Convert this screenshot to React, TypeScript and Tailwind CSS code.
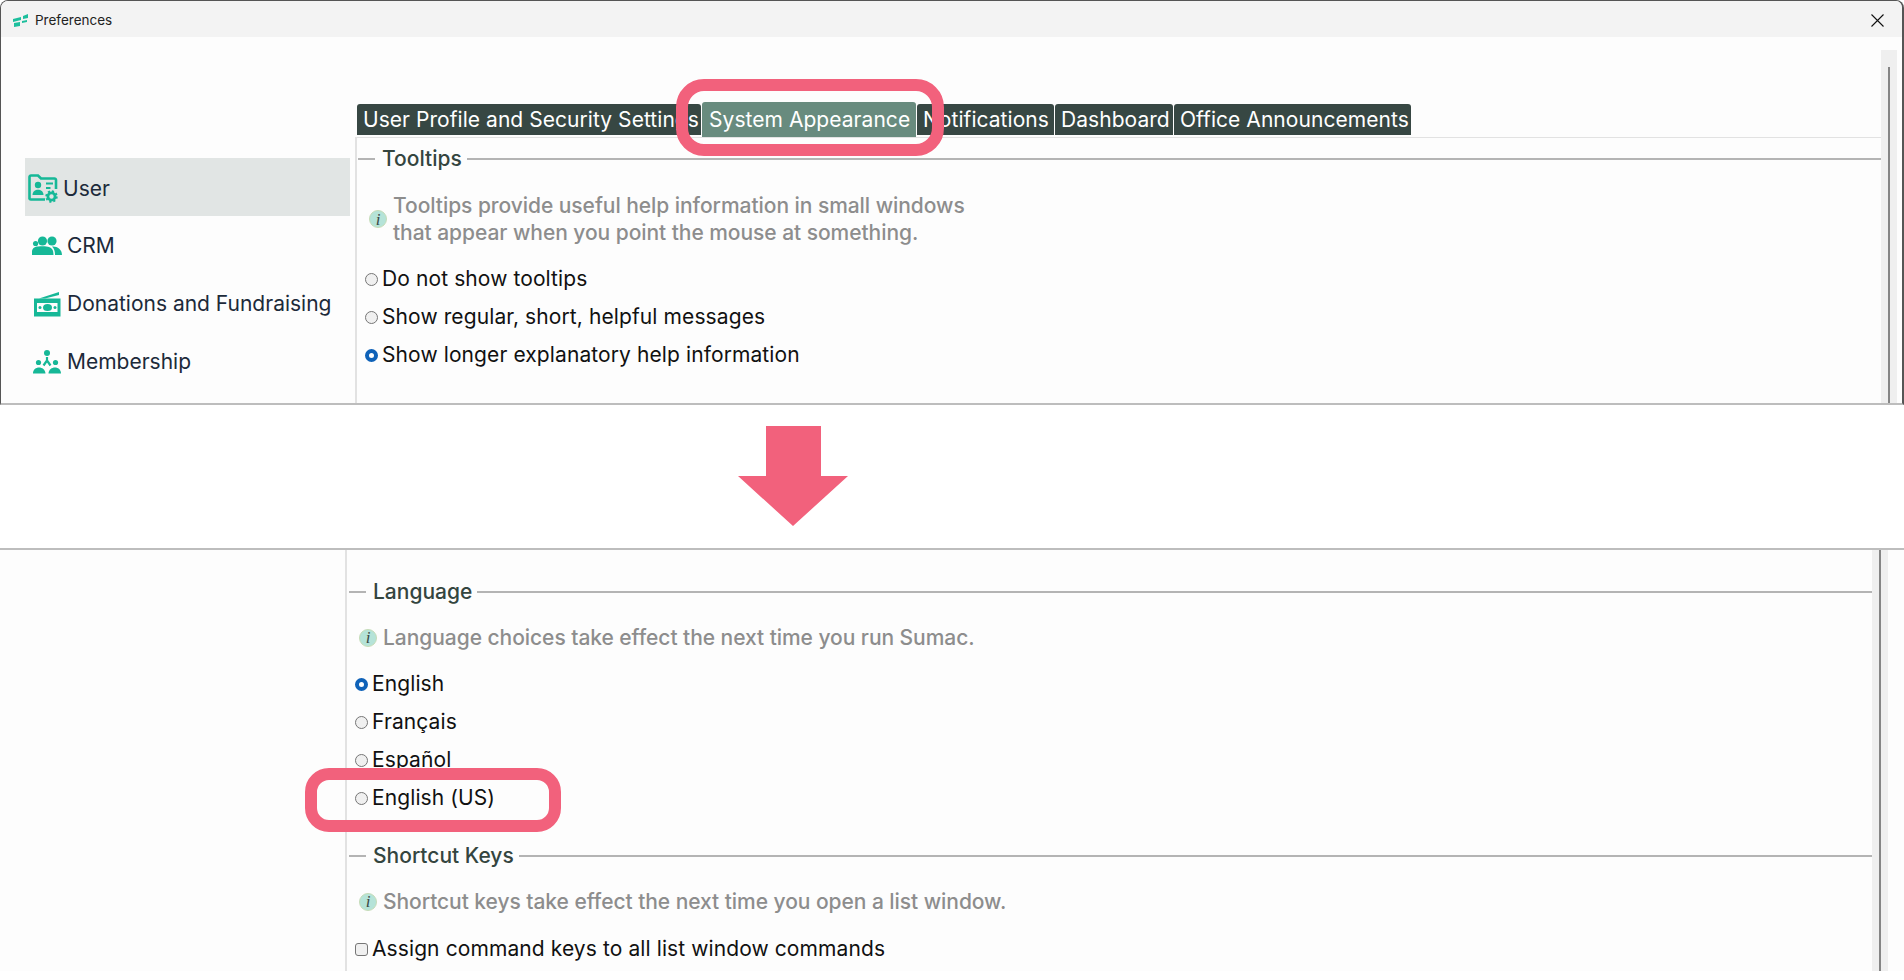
const FONT = "font-['Inter','Noto_Sans',sans-serif]";

const TABS = [
  { label: 'User Profile and Security Settings', width: 'w-[344px]', active: false },
  { label: 'System Appearance', width: 'w-[214px]', active: true },
  { label: 'Notifications', width: 'w-[137px]', active: false },
  { label: 'Dashboard', width: 'w-[118px]', active: false },
  { label: 'Office Announcements', width: 'w-[237px]', active: false },
];

function AppLogo() {
  return (
    <svg width="15" height="13" viewBox="0 0 15 13" className="shrink-0">
      <path d="M0 5 L8 3 V6 L0 8 Z M10 2 L15 0 V4 L10 5 Z M1 9 L7 8 V12 L1 13 Z M9 7 L14 6 V8 L9 9 Z" fill="#1dbf9d" />
    </svg>
  );
}

function UserIcon() {
  return (
    <svg width="30" height="29" viewBox="0 0 30 29" className="shrink-0">
      <path d="M1.500 25 V3 a1.500 1.500 0 0 1 1.500-1.500 H10 l3 3 H26.500 a1.500 1.500 0 0 1 1.500 1.500 V15 M17 25.500 H3 A1.500 1.500 0 0 1 1.500 24" fill="none" stroke="#16b897" strokeWidth="2.600" />
      <circle cx="10" cy="11" r="3.200" fill="#16b897" />
      <path d="M4.500 21 c0-7 11-7 11 0 Z" fill="#16b897" />
      <path d="M18 9.500 H25 M18 14 H22.500" stroke="#16b897" strokeWidth="2.200" />
      <circle cx="23.500" cy="22.500" r="3.600" fill="none" stroke="#16b897" strokeWidth="2.800" />
      <circle cx="23.500" cy="22.500" r="5.400" fill="none" stroke="#16b897" strokeWidth="1.600" strokeDasharray="2.200 2" />
    </svg>
  );
}

function CrmIcon() {
  return (
    <svg width="30" height="20" viewBox="0 0 30 20" className="shrink-0">
      <circle cx="10.500" cy="5" r="4.600" fill="#16b897" />
      <circle cx="20" cy="5" r="4.600" fill="#16b897" />
      <circle cx="3.600" cy="7.500" r="2.600" fill="#16b897" />
      <path d="M0 19 V16 C0 12 3 10.500 6 10.500 C9 10 15 10 17 11 C20 12 21.500 14 21.500 19 Z" fill="#16b897" />
      <path d="M20 10.500 C25 10 30 13 30 19 H23 C23 15 22 12.500 20 10.500 Z" fill="#16b897" />
    </svg>
  );
}

function DonationsIcon() {
  return (
    <svg width="28" height="25" viewBox="0 0 28 25" className="shrink-0">
      <path d="M6 6.500 L26 0 V3 L12 6.500 Z" fill="#16b897" />
      <path fillRule="evenodd" d="M1 6.500 H27.500 V24.500 H1 Z M4 11 V20 H24.500 V11 Z" fill="#16b897" />
      <ellipse cx="14.500" cy="15.500" rx="4.500" ry="3.600" fill="#16b897" />
      <circle cx="7" cy="15.500" r="1.500" fill="#16b897" />
      <circle cx="22" cy="15.500" r="1.500" fill="#16b897" />
    </svg>
  );
}

function MembershipIcon() {
  return (
    <svg width="28" height="24" viewBox="0 0 28 24" className="shrink-0">
      <circle cx="14" cy="3" r="3" fill="#16b897" />
      <circle cx="5.500" cy="12.500" r="2.600" fill="#16b897" />
      <circle cx="22.500" cy="12.500" r="2.600" fill="#16b897" />
      <path d="M14 7 V11 M14 10.500 L10.500 15.500 M14 10.500 L17.500 15.500" stroke="#16b897" strokeWidth="2.200" fill="none" />
      <path d="M0 23.500 C0 15.500 12 15.500 12.500 23.500 Z M15.500 23.500 C16 15.500 28 15.500 28 23.500 Z" fill="#16b897" />
    </svg>
  );
}

function InfoIcon() {
  return (
    <span className="flex h-[18px] w-[18px] shrink-0 items-center justify-center rounded-full border border-[#c6dcb8] bg-[#b5e3d8] font-['Liberation_Serif',serif] text-[17px] leading-none text-[#3b4a45] italic">
      i
    </span>
  );
}

function Radio({ checked }: { checked?: boolean }) {
  if (checked) {
    return <span className="h-[13px] w-[13px] shrink-0 rounded-full border-[4px] border-[#0f62b8] bg-white" />;
  }
  return <span className="h-[13px] w-[13px] shrink-0 rounded-full border border-[#767676] bg-[#f0f0f0]" />;
}

function Legend({ title }: { title: string }) {
  return (
    <div className="flex items-center">
      <div className="h-0.5 w-[17px] shrink-0 bg-[#b4b4b4]" />
      <div className="pr-[5px] pl-[7px] text-[21px] leading-7 font-medium text-[#34453f]">{title}</div>
      <div className="h-0.5 flex-1 bg-[#b4b4b4]" />
    </div>
  );
}

function Option({ label, checked, square, inset }: { label: string; checked?: boolean; square?: boolean; inset: string }) {
  return (
    <div className={`flex h-[38px] items-center gap-[4px] ${inset} text-[21px] tracking-[0.1px] text-[#111]`}>
      {square ? (
        <span className="h-[13px] w-[13px] shrink-0 rounded-[3px] border border-[#767676] bg-[#f0f0f0]" />
      ) : (
        <Radio checked={checked} />
      )}
      <span>{label}</span>
    </div>
  );
}

function Hint({ lines, inset }: { lines: string[]; inset: string }) {
  return (
    <div className={`flex items-center gap-[6px] ${inset} text-[21px] leading-[27px] font-medium tracking-[-0.05px] text-[#8d8d8d]`}>
      <InfoIcon />
      <div>
        {lines.map((line) => (
          <div key={line}>{line}</div>
        ))}
      </div>
    </div>
  );
}

function NavRow({ icon, label, selected }: { icon: React.ReactNode; label: string; selected?: boolean }) {
  return (
    <div className={`flex h-[58px] items-center ${selected ? 'gap-[5px] bg-[#e1e5e4] pt-[3px] pl-[3px]' : 'gap-[5px] pt-[2px] pl-[7px]'} text-[21px] text-[#1c2a3a]`}>
      <div className="flex w-[30px] shrink-0 justify-center">{icon}</div>
      <span>{label}</span>
    </div>
  );
}

function Scrollbar({ thumbOffset }: { thumbOffset: string }) {
  return (
    <div className={`flex w-4 shrink-0 justify-center bg-[#efefef] ${thumbOffset}`}>
      <div className="w-[2px] bg-[#858585]" />
    </div>
  );
}

function TopPanel() {
  return (
    <div className="relative h-[405px] overflow-hidden rounded-t-lg border-t border-r-2 border-b-2 border-l border-[#555] border-b-[#bdbdbd] bg-[#fdfdfd]">
      <div className="flex h-9 items-center bg-[#f3f3f3] pt-[2px] pr-[18px] pl-3">
        <AppLogo />
        <span className="ml-[7px] text-[13.5px] text-[#222]">Preferences</span>
        <svg width="13" height="13" viewBox="0 0 13 13" className="ml-auto">
          <path d="M0.500 0.500 L12.500 12.500 M12.500 0.500 L0.500 12.500" stroke="#111" strokeWidth="1.100" />
        </svg>
      </div>

      <div className="flex h-[367px]">
        <div className="w-[330px] shrink-0 pt-[121px] pl-6">
          <div className="w-[325px]">
            <NavRow icon={<UserIcon />} label="User" selected />
            <NavRow icon={<CrmIcon />} label="CRM" />
            <NavRow icon={<DonationsIcon />} label="Donations and Fundraising" />
            <NavRow icon={<MembershipIcon />} label="Membership" />
          </div>
        </div>

        <div className="flex min-w-0 flex-1 pl-[24px]">
          <div className="flex min-w-0 flex-1 flex-col pt-[65px]">
            <div className="flex h-[35px] items-center gap-[1px] pl-[2px]">
              {TABS.map((tab) => (
                <div
                  key={tab.label}
                  className={`${tab.width} ${tab.active ? 'h-[35px] bg-[#688b7e] pl-[7px] leading-[35px]' : 'h-[31px] bg-[#374743] pl-[6px] leading-[31px]'} overflow-hidden rounded-t-[3px] text-[21px] tracking-[0.05px] whitespace-nowrap text-white`}
                >
                  {tab.label}
                </div>
              ))}
            </div>
            <div className="flex-1 border-t border-l-2 border-[#e2e2e2] pt-[7px] pl-[1px]">
              <Legend title="Tooltips" />
              <div className="pt-[19px] pb-[14px]">
                <Hint inset="pl-[11px]" lines={['Tooltips provide useful help information in small windows', 'that appear when you point the mouse at something.']} />
              </div>
              <Option inset="pl-[7px]" label="Do not show tooltips" />
              <Option inset="pl-[7px]" label="Show regular, short, helpful messages" />
              <Option inset="pl-[7px]" label="Show longer explanatory help information" checked />
            </div>
          </div>
          <div className="flex w-[21px] shrink-0 pt-[13px] pr-[4px]">
            <Scrollbar thumbOffset="pt-[17px]" />
          </div>
        </div>
      </div>

      <div className="absolute top-[78px] left-[675px] h-[77px] w-[268px] rounded-[28px] border-[12px] border-[#f2617c]" />
    </div>
  );
}

function Arrow() {
  return (
    <div className="flex h-[143px] items-start pt-[21px] pl-[738px]">
      <svg width="110" height="100" viewBox="0 0 110 100">
        <path d="M28 0 H83 V50 H110 L55 100 L0 50 H28 Z" fill="#f2617c" />
      </svg>
    </div>
  );
}

function BottomPanel() {
  return (
    <div className="relative flex h-[423px] border-t-2 border-[#bdbdbd] bg-[#fdfdfd] pr-4">
      <div className="w-[345px] shrink-0" />
      <div className="min-w-0 flex-1 border-l-2 border-[#e2e2e2] pt-[28px] pl-[2px]">
        <Legend title="Language" />
        <div className="pt-[18px] pb-[14px]">
          <Hint inset="pl-[10px]" lines={['Language choices take effect the next time you run Sumac.']} />
        </div>
        <Option inset="pl-[6px]" label="English" checked />
        <Option inset="pl-[6px]" label="Français" />
        <Option inset="pl-[6px]" label="Español" />
        <Option inset="pl-[6px]" label="English (US)" />
        <div className="pt-[25px]">
          <Legend title="Shortcut Keys" />
        </div>
        <div className="pt-[18px] pb-[15px]">
          <Hint inset="pl-[10px]" lines={['Shortcut keys take effect the next time you open a list window.']} />
        </div>
        <Option inset="pl-[6px]" label="Assign command keys to all list window commands" square />
      </div>
      <Scrollbar thumbOffset="" />

      <div className="absolute top-[218px] left-[305px] h-[64px] w-[256px] rounded-[24px] border-[12px] border-[#f2617c]" />
    </div>
  );
}

export default function App() {
  return (
    <div className={`h-[980px] w-[1904px] overflow-hidden bg-white ${FONT}`}>
      <TopPanel />
      <Arrow />
      <BottomPanel />
    </div>
  );
}
